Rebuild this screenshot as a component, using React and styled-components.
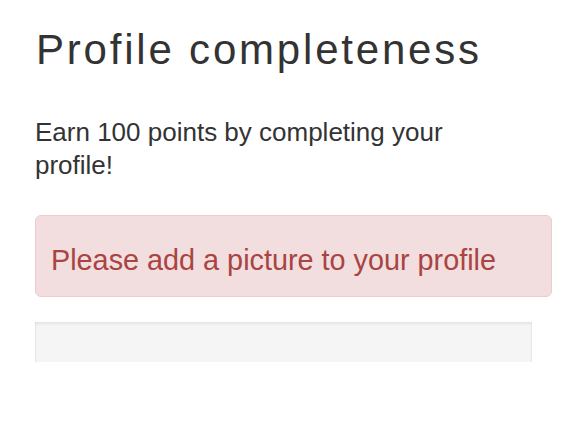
import React from "react";
import styled, { createGlobalStyle } from "styled-components";

const Global = createGlobalStyle`
  html, body { margin: 0; padding: 0; background: #fff; }
  body { font-family: "Liberation Sans", Arial, Helvetica, sans-serif; color: #333; }
`;

const Page = styled.div`
  padding: 27px 0 0 35px;
  width: 517px;
  display: flex;
  flex-direction: column;
`;

const Title = styled.h1`
  margin: 0 0 0 1px;
  font-size: 42px;
  line-height: 46px;
  font-weight: 400;
  letter-spacing: 2.8px;
  color: #333;
  white-space: nowrap;
`;

const Lead = styled.p`
  margin: 42.5px 0 0;
  font-size: 26px;
  line-height: 33px;
  color: #333;
  width: 470px;
`;

const Alert = styled.div`
  margin-top: 33.5px;
  box-sizing: border-box;
  height: 82px;
  padding: 23.6px 15px 0 15px;
  background: #f2dede;
  border: 1px solid #ebccd1;
  border-radius: 6px;
  color: #a94442;
  font-size: 28.8px;
  line-height: 41px;
`;

const Progress = styled.div`
  margin-top: 25px;
  width: 497px;
  height: 40px;
  background: #f5f5f5;
  box-shadow: inset 0 2px 3px rgba(0, 0, 0, 0.07), inset 1px 0 1px rgba(0, 0, 0, 0.03),
    inset -1px 0 1px rgba(0, 0, 0, 0.03);
`;

export default function App() {
  return (
    <>
      <Global />
      <Page>
        <Title>Profile completeness</Title>
        <Lead>Earn 100 points by completing your profile!</Lead>
        <Alert>Please add a picture to your profile</Alert>
        <Progress />
      </Page>
    </>
  );
}
